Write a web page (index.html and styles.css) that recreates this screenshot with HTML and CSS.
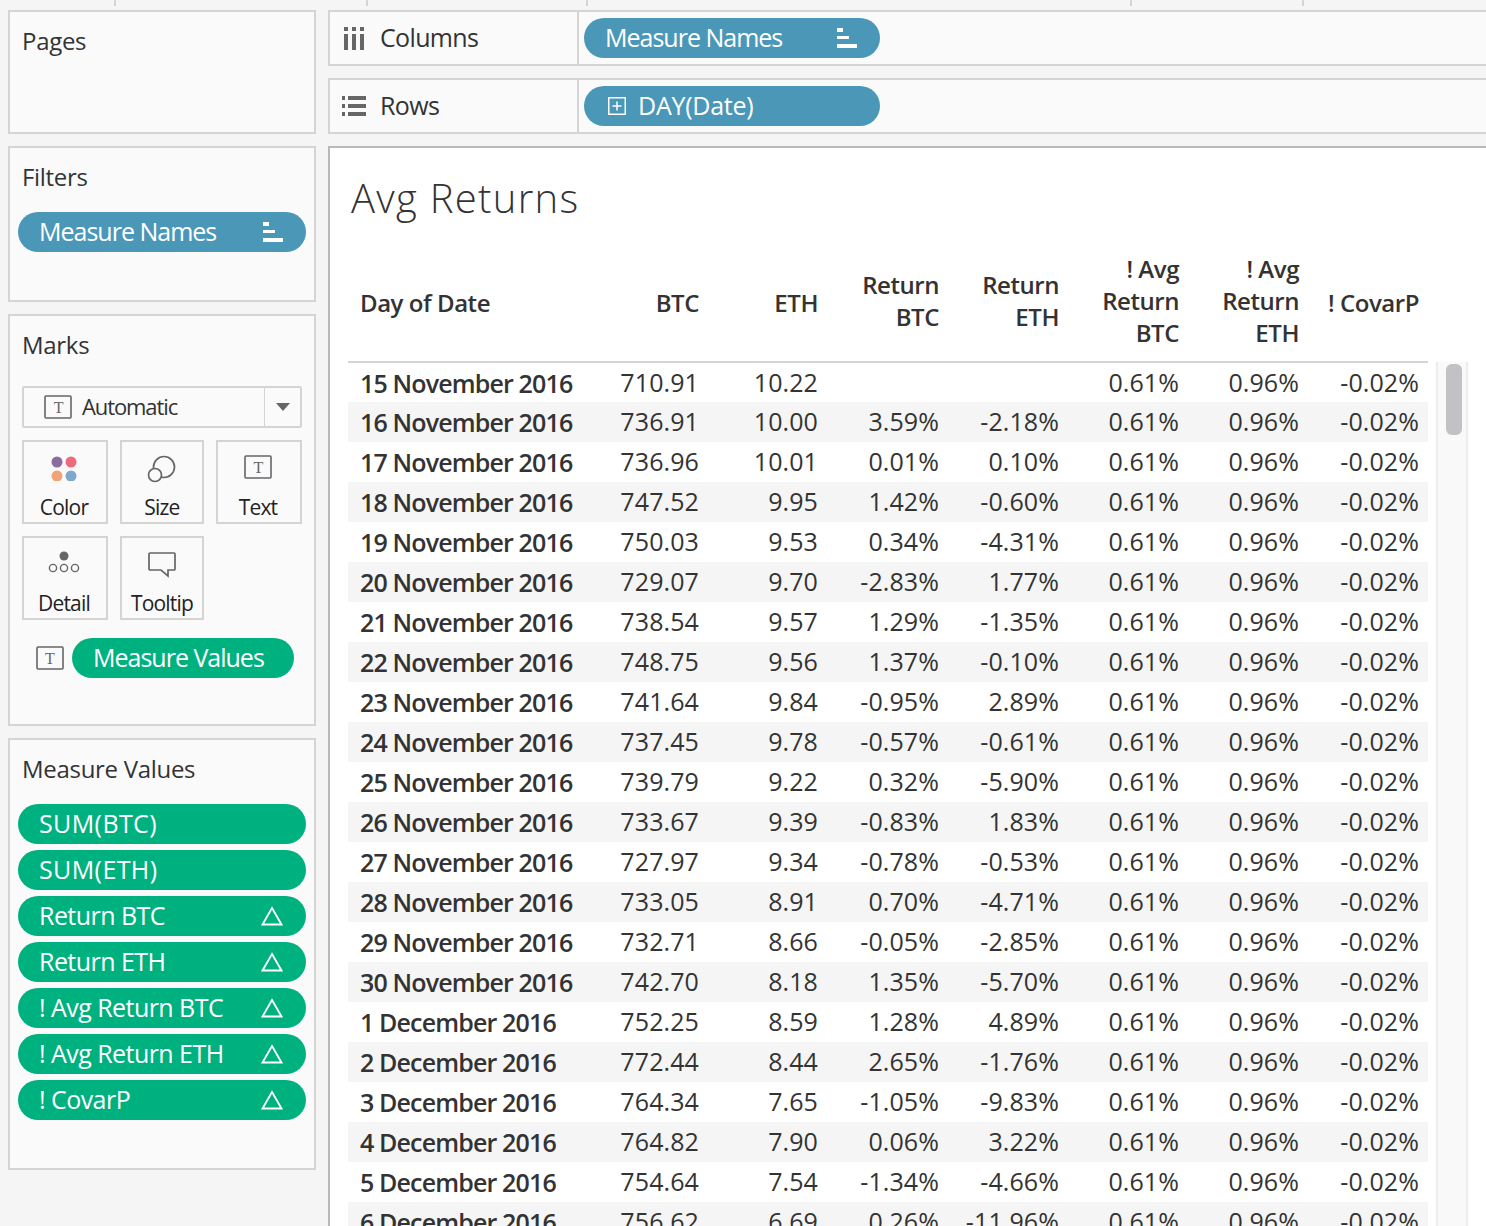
FILE: index.html
```html
<!DOCTYPE html>
<html lang="en">
<head>
  <meta charset="UTF-8">
  <meta name="viewport" content="width=device-width, initial-scale=1.0">
  <title>Avg Returns</title>
  <link rel="stylesheet" href="styles.css">
</head>
<body>
  <div class="topstrip">
    <span class="tick t1"></span><span class="tick t2"></span><span class="tick t3"></span><span class="tick t4"></span><span class="tick t5"></span>
  </div>
  <div class="workspace">
    <aside class="side">
      <section class="card pages">
        <h3>Pages</h3>
      </section>
      <section class="card filters">
        <h3>Filters</h3>
        <div class="pill blue">Measure Names
          <svg class="ic" width="20" height="20" viewBox="0 0 20 20" fill="#fff"><rect x="0" y="0" width="6" height="4"/><rect x="0" y="8" width="12" height="3"/><rect x="0" y="16" width="20" height="4"/></svg>
        </div>
      </section>
      <section class="card marks">
        <h3>Marks</h3>
        <div class="dropdown">
          <svg class="ticon" width="28" height="24" viewBox="0 0 28 24"><rect x="1" y="1" width="26" height="22" rx="1" fill="none" stroke="#666" stroke-width="1.6"/><text x="14" y="17.5" text-anchor="middle" font-family="Liberation Serif" font-size="16" fill="#666">T</text></svg>
          <span class="dd-label">Automatic</span>
          <span class="dd-arrow"><i></i></span>
        </div>
        <div class="tiles">
          <div class="tile">
            <svg width="28" height="26" viewBox="0 0 28 26"><circle cx="7" cy="7" r="5.5" fill="#8a6d9e"/><circle cx="21" cy="7" r="5.5" fill="#ee6a7c"/><circle cx="7" cy="21" r="5.5" fill="#f2a477"/><circle cx="21" cy="21" r="5.5" fill="#7ea9cc"/></svg>
            <span>Color</span>
          </div>
          <div class="tile">
            <svg width="30" height="28" viewBox="0 0 30 28" fill="none" stroke="#666" stroke-width="1.7"><circle cx="17" cy="12" r="10.5"/><circle cx="8" cy="20" r="6.5" fill="#fafafb"/></svg>
            <span>Size</span>
          </div>
          <div class="tile">
            <svg width="28" height="24" viewBox="0 0 28 24"><rect x="1" y="1" width="26" height="22" rx="1" fill="none" stroke="#666" stroke-width="1.6"/><text x="14" y="17.5" text-anchor="middle" font-family="Liberation Serif" font-size="16" fill="#666">T</text></svg>
            <span>Text</span>
          </div>
          <div class="tile">
            <svg width="32" height="24" viewBox="0 0 32 24"><circle cx="16" cy="5" r="4.5" fill="#666"/><g fill="none" stroke="#666" stroke-width="1.4"><circle cx="5" cy="17" r="3.6"/><circle cx="16" cy="17" r="3.6"/><circle cx="27" cy="17" r="3.6"/></g></svg>
            <span>Detail</span>
          </div>
          <div class="tile">
            <svg width="30" height="28" viewBox="0 0 30 28" fill="none" stroke="#666" stroke-width="1.7"><path d="M3 2h24a1 1 0 0 1 1 1v15a1 1 0 0 1-1 1h-6v6l-7-6H3a1 1 0 0 1-1-1V3a1 1 0 0 1 1-1z"/></svg>
            <span>Tooltip</span>
          </div>
        </div>
        <div class="markrow">
          <svg class="ticon" width="28" height="24" viewBox="0 0 28 24"><rect x="1" y="1" width="26" height="22" rx="1" fill="none" stroke="#666" stroke-width="1.6"/><text x="14" y="17.5" text-anchor="middle" font-family="Liberation Serif" font-size="16" fill="#666">T</text></svg>
          <div class="pill green short">Measure Values</div>
        </div>
      </section>
      <section class="card values">
        <h3>Measure Values</h3>
        <div class="pilllist">
          <div class="pill green caps">SUM(BTC)</div>
          <div class="pill green caps">SUM(ETH)</div>
          <div class="pill green">Return BTC <svg class="ic" width="22" height="20" viewBox="0 0 22 20" fill="none" stroke="#fff" stroke-width="1.8"><path d="M11 2 L20.5 18.5 H1.5 Z"/></svg></div>
          <div class="pill green">Return ETH <svg class="ic" width="22" height="20" viewBox="0 0 22 20" fill="none" stroke="#fff" stroke-width="1.8"><path d="M11 2 L20.5 18.5 H1.5 Z"/></svg></div>
          <div class="pill green">! Avg Return BTC <svg class="ic" width="22" height="20" viewBox="0 0 22 20" fill="none" stroke="#fff" stroke-width="1.8"><path d="M11 2 L20.5 18.5 H1.5 Z"/></svg></div>
          <div class="pill green">! Avg Return ETH <svg class="ic" width="22" height="20" viewBox="0 0 22 20" fill="none" stroke="#fff" stroke-width="1.8"><path d="M11 2 L20.5 18.5 H1.5 Z"/></svg></div>
          <div class="pill green">! CovarP <svg class="ic" width="22" height="20" viewBox="0 0 22 20" fill="none" stroke="#fff" stroke-width="1.8"><path d="M11 2 L20.5 18.5 H1.5 Z"/></svg></div>
        </div>
      </section>
    </aside>

    <main class="main">
      <div class="shelf">
        <div class="shelf-label">
          <svg width="24" height="24" viewBox="0 0 24 24" fill="#666"><rect x="2" y="1" width="4" height="4"/><rect x="10" y="1" width="4" height="4"/><rect x="18" y="1" width="4" height="4"/><rect x="2" y="8" width="4" height="16"/><rect x="10" y="8" width="4" height="16"/><rect x="18" y="8" width="4" height="16"/></svg>
          <span>Columns</span>
        </div>
        <div class="shelf-body">
          <div class="pill blue shelfpill">Measure Names
            <svg class="ic" width="20" height="20" viewBox="0 0 20 20" fill="#fff"><rect x="0" y="0" width="6" height="4"/><rect x="0" y="8" width="12" height="3"/><rect x="0" y="16" width="20" height="4"/></svg>
          </div>
        </div>
      </div>
      <div class="shelf">
        <div class="shelf-label">
          <svg width="24" height="22" viewBox="0 0 24 22" fill="#666"><rect x="0" y="1" width="3" height="4"/><rect x="6" y="1" width="18" height="4"/><rect x="0" y="9" width="3" height="4"/><rect x="6" y="9" width="18" height="4"/><rect x="0" y="17" width="3" height="4"/><rect x="6" y="17" width="18" height="4"/></svg>
          <span>Rows</span>
        </div>
        <div class="shelf-body">
          <div class="pill blue shelfpill dated caps">
            <svg class="ic" width="18" height="18" viewBox="0 0 18 18" fill="none" stroke="#fff" stroke-width="1.5"><rect x="0.75" y="0.75" width="16.5" height="16.5"/><path d="M9 4.5v9M4.5 9h9"/></svg>
            <span>DAY(Date)</span>
          </div>
        </div>
      </div>

      <div class="view">
        <h1>Avg Returns</h1>
        <div class="tablewrap">
          <table>
            <thead>
              <tr><th class="date one">Day of Date</th><th class="one">BTC</th><th class="one">ETH</th><th>Return<br>BTC</th><th>Return<br>ETH</th><th>! Avg<br>Return<br>BTC</th><th>! Avg<br>Return<br>ETH</th><th class="one">! CovarP</th></tr>
            </thead>
            <tbody>
              <tr><th class="date">15 November 2016</th><td>710.91</td><td>10.22</td><td></td><td></td><td>0.61%</td><td>0.96%</td><td>-0.02%</td></tr>
              <tr><th class="date">16 November 2016</th><td>736.91</td><td>10.00</td><td>3.59%</td><td>-2.18%</td><td>0.61%</td><td>0.96%</td><td>-0.02%</td></tr>
              <tr><th class="date">17 November 2016</th><td>736.96</td><td>10.01</td><td>0.01%</td><td>0.10%</td><td>0.61%</td><td>0.96%</td><td>-0.02%</td></tr>
              <tr><th class="date">18 November 2016</th><td>747.52</td><td>9.95</td><td>1.42%</td><td>-0.60%</td><td>0.61%</td><td>0.96%</td><td>-0.02%</td></tr>
              <tr><th class="date">19 November 2016</th><td>750.03</td><td>9.53</td><td>0.34%</td><td>-4.31%</td><td>0.61%</td><td>0.96%</td><td>-0.02%</td></tr>
              <tr><th class="date">20 November 2016</th><td>729.07</td><td>9.70</td><td>-2.83%</td><td>1.77%</td><td>0.61%</td><td>0.96%</td><td>-0.02%</td></tr>
              <tr><th class="date">21 November 2016</th><td>738.54</td><td>9.57</td><td>1.29%</td><td>-1.35%</td><td>0.61%</td><td>0.96%</td><td>-0.02%</td></tr>
              <tr><th class="date">22 November 2016</th><td>748.75</td><td>9.56</td><td>1.37%</td><td>-0.10%</td><td>0.61%</td><td>0.96%</td><td>-0.02%</td></tr>
              <tr><th class="date">23 November 2016</th><td>741.64</td><td>9.84</td><td>-0.95%</td><td>2.89%</td><td>0.61%</td><td>0.96%</td><td>-0.02%</td></tr>
              <tr><th class="date">24 November 2016</th><td>737.45</td><td>9.78</td><td>-0.57%</td><td>-0.61%</td><td>0.61%</td><td>0.96%</td><td>-0.02%</td></tr>
              <tr><th class="date">25 November 2016</th><td>739.79</td><td>9.22</td><td>0.32%</td><td>-5.90%</td><td>0.61%</td><td>0.96%</td><td>-0.02%</td></tr>
              <tr><th class="date">26 November 2016</th><td>733.67</td><td>9.39</td><td>-0.83%</td><td>1.83%</td><td>0.61%</td><td>0.96%</td><td>-0.02%</td></tr>
              <tr><th class="date">27 November 2016</th><td>727.97</td><td>9.34</td><td>-0.78%</td><td>-0.53%</td><td>0.61%</td><td>0.96%</td><td>-0.02%</td></tr>
              <tr><th class="date">28 November 2016</th><td>733.05</td><td>8.91</td><td>0.70%</td><td>-4.71%</td><td>0.61%</td><td>0.96%</td><td>-0.02%</td></tr>
              <tr><th class="date">29 November 2016</th><td>732.71</td><td>8.66</td><td>-0.05%</td><td>-2.85%</td><td>0.61%</td><td>0.96%</td><td>-0.02%</td></tr>
              <tr><th class="date">30 November 2016</th><td>742.70</td><td>8.18</td><td>1.35%</td><td>-5.70%</td><td>0.61%</td><td>0.96%</td><td>-0.02%</td></tr>
              <tr><th class="date">1 December 2016</th><td>752.25</td><td>8.59</td><td>1.28%</td><td>4.89%</td><td>0.61%</td><td>0.96%</td><td>-0.02%</td></tr>
              <tr><th class="date">2 December 2016</th><td>772.44</td><td>8.44</td><td>2.65%</td><td>-1.76%</td><td>0.61%</td><td>0.96%</td><td>-0.02%</td></tr>
              <tr><th class="date">3 December 2016</th><td>764.34</td><td>7.65</td><td>-1.05%</td><td>-9.83%</td><td>0.61%</td><td>0.96%</td><td>-0.02%</td></tr>
              <tr><th class="date">4 December 2016</th><td>764.82</td><td>7.90</td><td>0.06%</td><td>3.22%</td><td>0.61%</td><td>0.96%</td><td>-0.02%</td></tr>
              <tr><th class="date">5 December 2016</th><td>754.64</td><td>7.54</td><td>-1.34%</td><td>-4.66%</td><td>0.61%</td><td>0.96%</td><td>-0.02%</td></tr>
              <tr><th class="date">6 December 2016</th><td>756.62</td><td>6.69</td><td>0.26%</td><td>-11.96%</td><td>0.61%</td><td>0.96%</td><td>-0.02%</td></tr>
            </tbody>
          </table>
          <div class="scrolltrack"><div class="thumb"></div></div>
        </div>
      </div>
    </main>
  </div>
</body>
</html>
```

FILE: styles.css
```css
* {
  box-sizing: border-box;
}

html, body {
  height: 1226px;
  overflow: hidden;
}

body {
  margin: 0;
  background: #f5f5f6;
  font-family: "Open Sans", "Liberation Sans", sans-serif;
  color: #333;
}

.topstrip {
  height: 10px;
  display: flex;
}

.tick {
  width: 2px;
  height: 6px;
  background: #d4d4d4;
}

.t1 { margin-left: 114px; }
.t2 { margin-left: 250px; }
.t3 { margin-left: 218px; }
.t4 { margin-left: 542px; }
.t5 { margin-left: 170px; }

.workspace {
  display: flex;
  gap: 12px;
  padding-left: 8px;
}

.side {
  width: 308px;
  flex: none;
  display: flex;
  flex-direction: column;
  gap: 12px;
}

.card {
  background: #fafafb;
  border: 2px solid #d4d4d4;
  padding: 12px 8px 0 12px;
}

.card h3 {
  margin: 0;
  font-size: 24px;
  font-weight: 400;
  line-height: 34px;
  color: #333;
  letter-spacing: -0.3px;
}

.pages { height: 124px; }
.filters { height: 156px; }
.marks { height: 412px; }
.values { height: 432px; }

.pill {
  height: 40px;
  border-radius: 20px;
  color: #fff;
  font-size: 25px;
  letter-spacing: -1px;
  display: flex;
  align-items: center;
  justify-content: space-between;
  padding: 0 23px 2px 21px;
  white-space: nowrap;
}

.pilllist .pill { letter-spacing: -0.55px; }
.pilllist .caps, .caps { letter-spacing: 0.4px; }
.dated.caps { letter-spacing: -0.25px; }

.blue { background: #4b97b8; }
.green { background: #00b180; }

.ic { flex: none; margin-top: 2px; }

.filters .pill {
  width: 288px;
  margin: 18px 0 0 -4px;
}

.dropdown {
  width: 280px;
  height: 42px;
  margin-top: 24px;
  border: 2px solid #d4d4d4;
  border-radius: 2px;
  display: flex;
  align-items: center;
  padding-left: 20px;
  font-size: 22px;
  letter-spacing: -1.1px;
}

.ticon { flex: none; }

.dd-label {
  margin: 0 0 2px 10px;
  flex: 1;
}

.dd-arrow {
  width: 36px;
  height: 100%;
  border-left: 1px solid #d4d4d4;
  display: flex;
  align-items: center;
  justify-content: center;
}

.dd-arrow i {
  width: 0;
  height: 0;
  border-left: 7px solid transparent;
  border-right: 7px solid transparent;
  border-top: 8px solid #666;
}

.tiles {
  display: grid;
  grid-template-columns: 86px 84px 86px;
  grid-auto-rows: 84px;
  column-gap: 12px;
  row-gap: 12px;
  margin-top: 12px;
}

.tile {
  border: 2px solid #d4d4d4;
  display: flex;
  flex-direction: column;
  align-items: center;
  justify-content: space-between;
  padding: 13px 0 1px;
  font-size: 21px;
  letter-spacing: -0.8px;
  color: #222;
}

.tile:nth-child(3n+1), .tile:nth-child(3) {
  padding-right: 2px;
}

.markrow {
  display: flex;
  align-items: center;
  gap: 8px;
  margin: 18px 0 0 14px;
}

.short {
  width: 222px;
  padding-left: 21px;
}

.pilllist {
  margin: 18px 0 0 -4px;
  width: 288px;
  display: flex;
  flex-direction: column;
  gap: 6px;
}

.main {
  flex: 1;
  display: flex;
  flex-direction: column;
  gap: 12px;
  min-width: 0;
}

.shelf {
  height: 56px;
  display: flex;
  background: #fafafb;
  border: 2px solid #d4d4d4;
  border-right: none;
}

.shelf-label {
  width: 249px;
  flex: none;
  display: flex;
  align-items: center;
  gap: 14px;
  padding-left: 12px;
  border-right: 2px solid #d4d4d4;
  font-size: 25px;
  letter-spacing: -0.65px;
}

.shelf-label span {
  margin-bottom: 2px;
}

.shelf-body {
  flex: 1;
  padding: 6px 0 0 5px;
}

.shelfpill {
  width: 296px;
}

.dated {
  justify-content: flex-start;
  gap: 12px;
  padding-left: 24px;
}

.view {
  flex: 1;
  background: #fff;
  border-top: 2px solid #b9b9b9;
  border-left: 2px solid #b9b9b9;
  height: 1080px;
}

.view h1 {
  margin: 0;
  padding: 26px 0 0 21px;
  height: 86px;
  font-size: 40px;
  font-weight: 300;
  line-height: 48px;
  letter-spacing: 1.3px;
  color: #333;
}

.tablewrap {
  display: flex;
  margin: 0 0 0 18px;
}

table {
  border-collapse: collapse;
  table-layout: fixed;
  width: 1080px;
  flex: none;
  font-size: 25px;
}

thead tr {
  height: 128px;
  border-bottom: 2px solid #d4d4d4;
}

thead th {
  font-size: 24px;
  font-weight: 600;
  line-height: 32px;
  letter-spacing: -0.45px;
  text-align: right;
  padding: 6px 9px 0 0;
  vertical-align: middle;
}

thead th.one {
  padding-top: 10px;
}

thead th:nth-child(2) { width: 129px; }
thead th:nth-child(3) { width: 119px; }
thead th:nth-child(4) { width: 121px; }
thead th:nth-child(n+5) { width: 120px; }

tbody tr {
  height: 40px;
}

tbody tr:nth-child(even) {
  background: #f5f5f5;
}

tbody th {
  font-weight: 600;
  letter-spacing: -0.85px;
  padding-bottom: 1px;
}

th.date {
  width: 231px;
  text-align: left;
  padding-left: 12px;
  white-space: nowrap;
}

td {
  text-align: right;
  padding: 0 9px 2px 0;
  font-weight: 400;
  letter-spacing: 0.1px;
}

.scrolltrack {
  width: 32px;
  margin: 128px 0 0 8px;
  background: #f9f9f9;
  border-left: 2px solid #ececec;
  border-right: 2px solid #ececec;
  padding: 2px 0 0 8px;
}

.thumb {
  width: 16px;
  height: 71px;
  background: #c1c1c6;
  border-radius: 6px;
}
```
